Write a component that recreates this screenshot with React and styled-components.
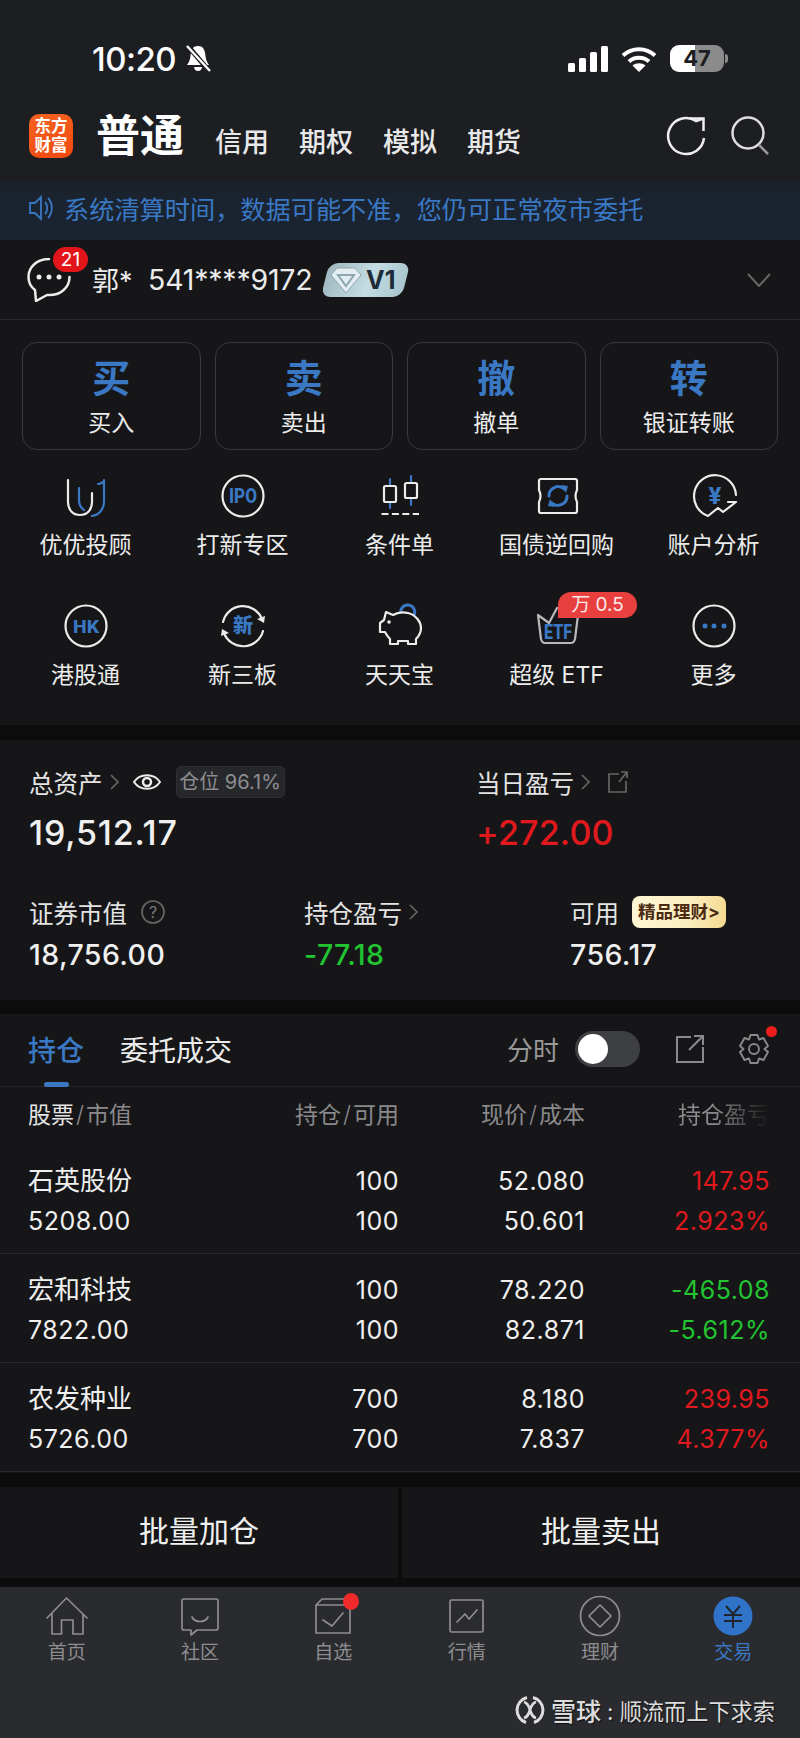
import React from 'react';
import styled, { createGlobalStyle } from 'styled-components';

const GlobalStyle = createGlobalStyle`
  html, body { margin: 0; padding: 0; background: #0c0c0d; }
  body { font-family: Inter, "Noto Sans CJK SC", sans-serif; }
  * { box-sizing: border-box; }
`;

const BLUE = '#3a78c4';
const RED = '#e0191e';
const GREEN = '#22c431';

const Page = styled.div`
  width: 800px;
  height: 1738px;
  overflow: hidden;
  display: flex;
  flex-direction: column;
  background: #0c0c0d;
  color: #ececec;
`;
const Top = styled.div`
  height: 180px;
  background: #1c1e22;
`;
const StatusBar = styled.div`
  height: 114px;
  padding: 45px 76px 0 92px;
  display: flex;
  align-items: flex-start;
  justify-content: space-between;
`;
const StatusTime = styled.div`
  display: flex;
  align-items: center;
  gap: 8px;
  height: 27px;
  font-size: 33px;
  font-weight: 500;
  letter-spacing: -0.5px;
  color: #fff;
`;
const StatusIcons = styled.div`
  display: flex;
  align-items: center;
  gap: 13px;
  height: 27px;
`;
const Battery = styled.div`
  position: relative;
  width: 54px;
  height: 27px;
  border-radius: 9px;
  background: linear-gradient(90deg, #fff 47%, #8b8b8b 47%);
  color: #1c1e22;
  font-size: 22px;
  font-weight: 700;
  line-height: 27px;
  text-align: center;
  &::after {
    content: '';
    position: absolute;
    right: -4px;
    top: 9px;
    width: 3px;
    height: 9px;
    border-radius: 0 3px 3px 0;
    background: #8b8b8b;
  }
`;
const Header = styled.div`
  display: flex;
  align-items: center;
  height: 44px;
  padding: 0 30px 0 29px;
`;
const Logo = styled.div`
  width: 44px;
  height: 44px;
  border-radius: 10px;
  background: linear-gradient(160deg, #f5631f, #f0480f);
  color: #fff;
  font-size: 16.5px;
  font-weight: 700;
  line-height: 19px;
  text-align: center;
  padding-top: 3px;
`;
const Title = styled.div`
  margin-left: 23px;
  font-size: 44px;
  font-weight: 700;
  line-height: 44px;
  color: #fff;
`;
const Modes = styled.div`
  display: flex;
  gap: 30px;
  margin-left: 31px;
  padding-top: 14px;
  font-size: 27px;
  font-weight: 500;
  line-height: 30px;
  color: #e8e8e8;
`;
const HeaderIcons = styled.div`
  margin-left: auto;
  display: flex;
  gap: 24px;
`;
const Notice = styled.div`
  height: 60px;
  display: flex;
  align-items: center;
  gap: 10px;
  padding: 0 0 5px 28px;
  background: linear-gradient(180deg, #1b2028, #1a2431 40%);
  color: ${BLUE};
  font-size: 25.2px;
  white-space: nowrap;
`;
const Panel = styled.div`
  background: #161618;
`;
const Account = styled.div`
  height: 80px;
  display: flex;
  align-items: center;
  padding: 0 29px 0 27px;
  border-bottom: 1px solid #2a2a2c;
  background: #161618;
`;
const ChatWrap = styled.div`
  position: relative;
  width: 44px;
  height: 44px;
  margin-right: 21px;
`;
const ChatBadge = styled.div`
  position: absolute;
  left: 26px;
  top: -11px;
  width: 35px;
  height: 25px;
  border-radius: 13px;
  background: #e3151b;
  color: #fff;
  font-size: 19px;
  line-height: 25px;
  text-align: center;
`;
const AccountName = styled.div`
  font-size: 27px;
  width: 56px;
  color: #ececec;
`;
const AccountNo = styled.div`
  font-size: 28.5px;
  width: 177px;
  letter-spacing: -0.2px;
  color: #ececec;
`;
const LevelTag = styled.div`
  position: relative;
  display: flex;
  align-items: center;
  gap: 4px;
  width: 81px;
  height: 34px;
  padding-left: 5px;
  color: #1d2c38;
  font-size: 25px;
  font-weight: 700;
  &::before {
    content: '';
    position: absolute;
    inset: 0;
    z-index: 0;
    background: linear-gradient(100deg, #9fb8c0, #c4dde3 55%, #a6c4cc);
    border-radius: 9px;
    transform: skewX(-14deg);
  }
  & > * { position: relative; z-index: 1; }
`;
const Chevron = styled.div`
  margin-left: auto;
  display: flex;
`;
const ActionRow = styled.div`
  display: grid;
  grid-template-columns: repeat(4, 178.5px);
  gap: 14px;
  padding: 22px 22px 0 22px;
`;
const ActionCard = styled.div`
  height: 108px;
  border: 1px solid #3a3a3c;
  border-radius: 15px;
  display: flex;
  flex-direction: column;
  align-items: center;
  padding-top: 10px;
`;
const ActionGlyph = styled.div`
  font-size: 38px;
  font-weight: 700;
  line-height: 50px;
  color: ${BLUE};
`;
const ActionLabel = styled.div`
  font-size: 23px;
  line-height: 32px;
  margin-top: 4px;
  color: #ececec;
`;
const Shortcuts = styled.div`
  display: grid;
  grid-template-columns: repeat(5, 157px);
  row-gap: 41px;
  padding: 22px 8px 34px 7px;
`;
const Shortcut = styled.div`
  position: relative;
  display: flex;
  flex-direction: column;
  align-items: center;
  gap: 9px;
  font-size: 23px;
  line-height: 32px;
  color: #ececec;
`;
const DealBadge = styled.div`
  position: absolute;
  left: 80px;
  top: -10px;
  width: 79px;
  height: 26px;
  border-radius: 13px 13px 13px 0;
  background: #e8403f;
  color: #fbeaea;
  font-size: 19px;
  line-height: 26px;
  text-align: center;
  white-space: nowrap;
`;
const Gap = styled.div`
  height: ${(p) => p.$h}px;
`;
const Assets = styled(Panel)`
  height: 260px;
  padding: 26px 0 0 29px;
`;
const AssetRow = styled.div`
  display: grid;
  grid-template-columns: ${(p) => p.$cols};
  margin-top: ${(p) => p.$top || 0}px;
`;
const AssetLabel = styled.div`
  display: flex;
  align-items: center;
  height: 32px;
  font-size: 24.5px;
  color: #e4e4e4;
`;
const ArrowBox = styled.span`
  display: flex;
  margin-left: 3px;
`;
const AssetValue = styled.div`
  font-size: ${(p) => p.$size}px;
  font-weight: 500;
  line-height: ${(p) => p.$line}px;
  margin-top: ${(p) => p.$top}px;
  letter-spacing: ${(p) => p.$track || 0}px;
  color: ${(p) => p.$color || '#f0f0f0'};
`;
const Eye = styled.span`
  display: flex;
  margin-left: 11px;
`;
const ExternalBox = styled.span`
  display: flex;
  margin-left: 14px;
`;
const PositionPill = styled.div`
  margin-left: 15px;
  width: 109px;
  height: 32px;
  border: 1px solid #303033;
  border-radius: 5px;
  background: #26272b;
  color: #8d8d90;
  font-size: 20px;
  line-height: 30px;
  text-align: center;
  white-space: nowrap;
`;
const GoldTag = styled.div`
  margin-left: 13px;
  width: 94px;
  height: 32px;
  border-radius: 8px;
  background: linear-gradient(100deg, #fff6d6, #fbeec0 60%, #f5d98e);
  color: #4a2a10;
  font-size: 17.5px;
  font-weight: 700;
  line-height: 32px;
  text-align: center;
  white-space: nowrap;
`;
const Holdings = styled(Panel)`
  height: 459px;
`;
const TabBar = styled.div`
  position: relative;
  height: 73px;
  display: flex;
  align-items: center;
  gap: 36px;
  padding: 0 30px 3px 28px;
  border-bottom: 1px solid #252527;
`;
const TabItem = styled.div`
  font-size: 28px;
  color: ${(p) => (p.$active ? BLUE : '#ececec')};
  font-weight: ${(p) => (p.$active ? 500 : 400)};
`;
const TabMarker = styled.div`
  position: absolute;
  left: 44px;
  bottom: -1px;
  width: 25px;
  height: 5px;
  border-radius: 3px;
  background: ${BLUE};
`;
const TabTools = styled.div`
  margin-left: auto;
  display: flex;
  align-items: center;
`;
const ToolLabel = styled.div`
  font-size: 26px;
  color: #999;
  margin-right: 16px;
`;
const Toggle = styled.div`
  width: 65px;
  height: 36px;
  border-radius: 18px;
  background: #3e3f42;
  padding: 3px;
  margin-right: 36px;
  &::before {
    content: '';
    display: block;
    width: 30px;
    height: 30px;
    border-radius: 50%;
    background: #fff;
  }
`;
const GearWrap = styled.div`
  position: relative;
  display: flex;
  margin-left: 34px;
`;
const GearDot = styled.div`
  position: absolute;
  right: -7px;
  top: -7px;
  width: 11px;
  height: 11px;
  border-radius: 50%;
  background: #ef1c1c;
`;
const TableGrid = styled.div`
  display: grid;
  grid-template-columns: 210px 161px 186px 185px;
  padding: 0 30px 0 28px;
`;
const TableHead = styled(TableGrid)`
  height: 58px;
  padding-bottom: 6px;
  align-items: center;
  font-size: 23px;
  color: #8a8a8c;
`;
const HeadCell = styled.div`
  text-align: ${(p) => (p.$left ? 'left' : 'right')};
  white-space: nowrap;
  ${(p) => p.$fade && `
    -webkit-mask-image: linear-gradient(90deg, #000 70%, transparent 100%);
    mask-image: linear-gradient(90deg, #000 70%, transparent 100%);
  `}
`;
const HeadStrong = styled.span`
  color: #e4e4e4;
`;
const HeadSlash = styled.span`
  margin: 0 2px;
  font-weight: 300;
`;
const Row = styled(TableGrid)`
  height: 109px;
  padding-top: 16px;
  border-bottom: 1px solid #28282a;
`;
const Cell = styled.div`
  text-align: ${(p) => (p.$left ? 'left' : 'right')};
  color: ${(p) => p.$color || '#f0f0f0'};
`;
const CellLine = styled.div`
  height: 40px;
  line-height: 40px;
  font-size: ${(p) => (p.$name ? 26 : 25)}px;
  letter-spacing: ${(p) => (p.$name ? 0 : 0.5)}px;
  white-space: nowrap;
`;
const BulkBar = styled.div`
  display: grid;
  grid-template-columns: 398px 398px;
  gap: 4px;
  margin-top: 14px;
  height: 91px;
`;
const BulkButton = styled(Panel)`
  display: flex;
  align-items: center;
  justify-content: center;
  padding-bottom: 7px;
  font-size: 30px;
  color: #f0f0f0;
`;
const Footer = styled.div`
  flex: 1;
  margin-top: 9px;
  background: #2a2b2f;
  padding-top: 8px;
`;
const FooterTabs = styled.div`
  display: grid;
  grid-template-columns: repeat(6, 1fr);
`;
const FooterTab = styled.div`
  position: relative;
  display: flex;
  flex-direction: column;
  align-items: center;
  gap: 1px;
  font-size: 19px;
  line-height: 26px;
  color: ${(p) => (p.$active ? BLUE : '#8e8e90')};
`;
const FooterDot = styled.div`
  position: absolute;
  left: 76px;
  top: -2px;
  width: 16px;
  height: 17px;
  border-radius: 50%;
  background: #f02a2a;
`;
const Watermark = styled.div`
  display: flex;
  align-items: center;
  justify-content: flex-end;
  gap: 6px;
  margin-top: 29px;
  padding-right: 25px;
  height: 30px;
  color: #dcdcdc;
  text-shadow: 1px 1px 1px rgba(0, 0, 0, 0.6);
  white-space: nowrap;
`;
const WatermarkName = styled.span`
  font-size: 25px;
  font-weight: 500;
`;
const WatermarkUser = styled.span`
  font-size: 22.2px;
`;

const line = { fill: 'none', stroke: '#ececec', strokeWidth: 2.2, strokeLinecap: 'round', strokeLinejoin: 'round' };
const blueLine = { ...line, stroke: BLUE };
const tabLine = { fill: 'none', stroke: '#8e8e90', strokeWidth: 1.7, strokeLinecap: 'round', strokeLinejoin: 'round' };
const iconText = { fill: BLUE, fontWeight: 800, textAnchor: 'middle', lengthAdjust: 'spacingAndGlyphs' };

const Ic = ({ size = 48, children }) => (
  <svg width={size} height={size} viewBox={`0 0 ${size} ${size}`}>{children}</svg>
);

const shortcuts = [
  { label: '优优投顾', icon: (
    <Ic>
      <path {...line} d="M6 8V30C6 38 11 43 18 43C25 43 30 38 30 30V21" />
      <path {...blueLine} d="M17 16V28C17 33 19 36 22 38" />
      <path {...blueLine} d="M36 12C39 12 42 10 42 8V30C42 37 37 43 30 44" />
    </Ic>
  ) },
  { label: '打新专区', icon: (
    <Ic>
      <circle {...line} cx="24" cy="24" r="20.5" />
      <text {...iconText} x="24" y="31" fontSize="20" textLength="28" fontFamily="Roboto, sans-serif">IPO</text>
    </Ic>
  ) },
  { label: '条件单', icon: (
    <Ic>
      <path {...blueLine} d="M14 7V14M14 30V36M35 4V11M35 26V33" />
      <rect {...line} x="8" y="14" width="12" height="16" rx="1.5" />
      <rect {...line} x="29" y="11" width="12" height="15" rx="1.5" />
      <path {...line} strokeLinecap="butt" strokeDasharray="7 3.4" d="M5.5 42H43" />
    </Ic>
  ) },
  { label: '国债逆回购', icon: (
    <Ic>
      <path {...line} d="M8 7H42A2 2 0 0 1 44 9V18Q41 24 44 30V39A2 2 0 0 1 42 41H8A2 2 0 0 1 6 39V30Q9 24 6 18V9A2 2 0 0 1 8 7Z" />
      <path {...blueLine} strokeWidth="3" d="M16 24A9 9 0 0 1 31 17M34 24A9 9 0 0 1 19 31" />
      <path fill={BLUE} d="M28 13L35 14L33 21ZM22 35L15 34L17 27Z" />
    </Ic>
  ) },
  { label: '账户分析', icon: (
    <Ic>
      <path {...line} d="M46 23A21 21 0 1 0 18 44L28 36L33 40L46 30H38" />
      <text {...iconText} x="25" y="32" fontSize="24" fontFamily="Roboto, sans-serif">¥</text>
    </Ic>
  ) },
  { label: '港股通', icon: (
    <Ic>
      <circle {...line} cx="24" cy="24" r="20.5" />
      <text {...iconText} x="24" y="30.5" fontSize="18" textLength="26" fontFamily="Roboto, sans-serif">HK</text>
    </Ic>
  ) },
  { label: '新三板', icon: (
    <Ic>
      <path {...line} d="M4 20A20.5 20.5 0 0 1 43 17M44 29A20.5 20.5 0 0 1 5 31" />
      <path fill="#ececec" d="M38 17L46 14L45 21ZM10 31L2 34L3 27Z" />
      <text {...iconText} x="24" y="31" fontSize="20" fontFamily='"Noto Sans CJK SC", sans-serif'>新</text>
    </Ic>
  ) },
  { label: '天天宝', icon: (
    <Ic>
      <path {...blueLine} strokeWidth="3" d="M25 12A7 7 0 1 1 38 13" />
      <path fill="#161618" stroke="#ececec" strokeWidth="2.2" strokeLinejoin="round" d="M10 10L17 13C22 10 28 10 32 11C40 13 45 20 45 26C45 32 42 35 40 37V42H32V39H22V42H14V37C12 35 10 32 9 30H4V21L8 18Z" />
      <circle cx="13" cy="20" r="1.8" fill="#ececec" />
    </Ic>
  ) },
  { label: '超级 ETF', badge: '万 0.5', icon: (
    <Ic>
      <path {...line} stroke="#b9b9bb" d="M5 13L8 37Q9 41 12 41H38Q41 41 42 37L45 13M5 13L16 21L24 6" />
      <text {...iconText} x="25" y="37" fontSize="19.5" textLength="28" fontFamily="Roboto, sans-serif">ETF</text>
    </Ic>
  ) },
  { label: '更多', icon: (
    <Ic>
      <circle {...line} cx="24" cy="24" r="20.5" />
      <circle cx="15" cy="24" r="2.5" fill={BLUE} />
      <circle cx="24" cy="24" r="2.5" fill={BLUE} />
      <circle cx="34" cy="24" r="2.5" fill={BLUE} />
    </Ic>
  ) },
];

const footerTabs = [
  { label: '首页', icon: <path {...tabLine} d="M2 23L21.5 3L42 23M7 19V39H16.5V25H28V39H38V19" /> },
  { label: '社区', icon: (
    <>
      <path {...tabLine} d="M6 4H38A2 2 0 0 1 40 6V33A2 2 0 0 1 38 35H19L13 40V35H6A2 2 0 0 1 4 33V6A2 2 0 0 1 6 4Z" />
      <path {...tabLine} d="M14 22C17 28 27 28 30 22" />
    </>
  ) },
  { label: '自选', dot: true, icon: (
    <>
      <path {...tabLine} d="M5 10H39V38H5ZM5 10L11 4H34" />
      <path {...tabLine} d="M12 25L21 31L32 18" />
    </>
  ) },
  { label: '行情', icon: (
    <>
      <rect {...tabLine} x="5" y="5" width="33" height="32" rx="1.5" />
      <path {...tabLine} d="M12 27L20 19L24 24L32 15" />
    </>
  ) },
  { label: '理财', icon: (
    <>
      <circle {...tabLine} cx="22" cy="21" r="19.5" />
      <path {...tabLine} d="M22 10L33 21L22 32L11 21Z" />
    </>
  ) },
  { label: '交易', active: true, icon: (
    <>
      <circle cx="22" cy="21" r="19.5" fill="#2f74c8" />
      <path fill="none" stroke="#20242c" strokeWidth="2" d="M15 11L22 19L29 11M13 20H31M13 26H31M22 19V33" />
    </>
  ) },
];

const rows = [
  { name: '石英股份', value: '5208.00', qty: '100', free: '100', price: '52.080', cost: '50.601', pnl: '147.95', pct: '2.923%', color: RED },
  { name: '宏和科技', value: '7822.00', qty: '100', free: '100', price: '78.220', cost: '82.871', pnl: '-465.08', pct: '-5.612%', color: GREEN },
  { name: '农发种业', value: '5726.00', qty: '700', free: '700', price: '8.180', cost: '7.837', pnl: '239.95', pct: '4.377%', color: RED },
];

const Arrow = () => (
  <ArrowBox>
    <svg width="16" height="22" viewBox="0 0 16 22">
      <path d="M5 4L12 11L5 18" fill="none" stroke="#666" strokeWidth="1.7" />
    </svg>
  </ArrowBox>
);

function App() {
  return (
    <Page>
      <GlobalStyle />
      <Top>
        <StatusBar>
          <StatusTime>
            10:20
            <svg width="28" height="27" viewBox="0 0 28 27">
              <path fill="#fff" d="M14 1C8 1 7 6 6.5 11C6 15 5 17 3 20H25C23 17 22 15 21.5 11C21 6 20 1 14 1ZM10 22C10.5 25 12 26 14 26C16 26 17.5 25 18 22Z" />
              <path stroke="#1c1e22" strokeWidth="5" d="M3 0L26 27" />
              <path stroke="#fff" strokeWidth="2.4" d="M3 1L26 26" />
            </svg>
          </StatusTime>
          <StatusIcons>
            <svg width="40" height="26" viewBox="0 0 40 26">
              <rect x="0" y="17" width="7" height="9" rx="1.5" fill="#fff" />
              <rect x="11" y="12" width="7" height="14" rx="1.5" fill="#fff" />
              <rect x="22" y="6" width="7" height="20" rx="1.5" fill="#fff" />
              <rect x="33" y="0" width="7" height="26" rx="1.5" fill="#fff" />
            </svg>
            <svg width="36" height="26" viewBox="0 0 36 26">
              <path fill="none" stroke="#fff" strokeWidth="4" d="M2 9.5C11 1 25 1 34 9.5M8 15.5C13.5 10.5 22.5 10.5 28 15.5" />
              <path fill="#fff" d="M18 26L11.5 19.5C15 16.5 21 16.5 24.5 19.5Z" />
            </svg>
            <Battery>47</Battery>
          </StatusIcons>
        </StatusBar>
        <Header>
          <Logo>东方<br />财富</Logo>
          <Title>普通</Title>
          <Modes>
            <span>信用</span>
            <span>期权</span>
            <span>模拟</span>
            <span>期货</span>
          </Modes>
          <HeaderIcons>
            <svg width="40" height="40" viewBox="0 0 40 40">
              <path fill="none" stroke="#eee" strokeWidth="2.5" d="M38 22A18 18 0 1 1 30 5L36 3" />
              <path fill="none" stroke="#eee" strokeWidth="2.5" d="M24 2.5H37.5V15" />
            </svg>
            <svg width="40" height="40" viewBox="0 0 40 40">
              <circle cx="18" cy="17" r="15.5" fill="none" stroke="#ddd" strokeWidth="2.5" />
              <path stroke="#999" strokeWidth="2.5" d="M29 29L38 38" />
            </svg>
          </HeaderIcons>
        </Header>
      </Top>
      <Notice>
        <svg width="26" height="26" viewBox="0 0 26 26">
          <path fill="none" stroke={BLUE} strokeWidth="1.8" d="M2 8H7L13 2V24L7 18H2ZM17 7C20 10 20 16 17 19M20 3C25 8 25 18 20 23" />
        </svg>
        系统清算时间，数据可能不准，您仍可正常夜市委托
      </Notice>
      <Account>
        <ChatWrap>
          <svg width="44" height="44" viewBox="0 0 44 44">
            <path {...line} strokeWidth="2.5" d="M22 1C10 1 1.5 9 1.5 19C1.5 25 4 29 8 32L9 43L20 37C33 38 42.5 30 42.5 19" />
            <circle cx="12" cy="19" r="2.5" fill="#ececec" />
            <circle cx="22" cy="19" r="2.5" fill="#ececec" />
            <circle cx="32" cy="19" r="2.5" fill="#ececec" />
          </svg>
          <ChatBadge>21</ChatBadge>
        </ChatWrap>
        <AccountName>郭*</AccountName>
        <AccountNo>541****9172</AccountNo>
        <LevelTag>
          <svg width="32" height="28" viewBox="0 0 32 28">
            <path fill="#e2eef1" stroke="#8ea7ae" d="M7 2H25L31 9L16 27L1 9Z" />
            <path fill="none" stroke="#8ea7ae" strokeWidth="2" d="M8 9H24L16 20Z" />
          </svg>
          <span>V1</span>
        </LevelTag>
        <Chevron>
          <svg width="24" height="14" viewBox="0 0 24 14">
            <path d="M1 1L12 13L23 1" fill="none" stroke="#666" strokeWidth="2" />
          </svg>
        </Chevron>
      </Account>
      <Panel>
        <ActionRow>
          <ActionCard><ActionGlyph>买</ActionGlyph><ActionLabel>买入</ActionLabel></ActionCard>
          <ActionCard><ActionGlyph>卖</ActionGlyph><ActionLabel>卖出</ActionLabel></ActionCard>
          <ActionCard><ActionGlyph>撤</ActionGlyph><ActionLabel>撤单</ActionLabel></ActionCard>
          <ActionCard><ActionGlyph>转</ActionGlyph><ActionLabel>银证转账</ActionLabel></ActionCard>
        </ActionRow>
        <Shortcuts>
          {shortcuts.map((s) => (
            <Shortcut key={s.label}>
              {s.icon}
              {s.badge && <DealBadge>{s.badge}</DealBadge>}
              <span>{s.label}</span>
            </Shortcut>
          ))}
        </Shortcuts>
      </Panel>
      <Gap $h={15} />
      <Assets>
        <AssetRow $cols="447px 1fr">
          <div>
            <AssetLabel>
              总资产<Arrow />
              <Eye>
                <svg width="28" height="20" viewBox="0 0 28 20">
                  <path fill="none" stroke="#ececec" strokeWidth="2" d="M1 10C7 1 21 1 27 10C21 19 7 19 1 10Z" />
                  <circle cx="14" cy="10" r="4" fill="none" stroke="#ececec" strokeWidth="2.5" />
                </svg>
              </Eye>
              <PositionPill>仓位 96.1%</PositionPill>
            </AssetLabel>
            <AssetValue $size={34} $line={44} $top={13} $track={0.8}>19,512.17</AssetValue>
          </div>
          <div>
            <AssetLabel>
              当日盈亏<Arrow />
              <ExternalBox>
                <svg width="22" height="24" viewBox="0 0 22 24">
                  <path fill="none" stroke="#666" strokeWidth="1.7" d="M12 4H2V22H19V11M12 12L20 2M14 2H20V8" />
                </svg>
              </ExternalBox>
            </AssetLabel>
            <AssetValue $size={34} $line={44} $top={13} $track={0.2} $color={RED}>+272.00</AssetValue>
          </div>
        </AssetRow>
        <AssetRow $cols="275px 266px 1fr" $top={41}>
          <div>
            <AssetLabel>
              证券市值
              <svg width="38" height="24" viewBox="0 0 38 24">
                <circle cx="26" cy="12" r="11" fill="none" stroke="#666" strokeWidth="1.7" />
                <text x="26" y="18" fontSize="16" fill="#777" textAnchor="middle">?</text>
              </svg>
            </AssetLabel>
            <AssetValue $size={28.5} $line={36} $top={9} $track={0.4}>18,756.00</AssetValue>
          </div>
          <div>
            <AssetLabel>持仓盈亏<Arrow /></AssetLabel>
            <AssetValue $size={28.5} $line={36} $top={9} $track={0.4} $color={GREEN}>-77.18</AssetValue>
          </div>
          <div>
            <AssetLabel>可用<GoldTag>精品理财&gt;</GoldTag></AssetLabel>
            <AssetValue $size={28.5} $line={36} $top={9} $track={0.4}>756.17</AssetValue>
          </div>
        </AssetRow>
      </Assets>
      <Gap $h={14} />
      <Holdings>
        <TabBar>
          <TabItem $active>持仓</TabItem>
          <TabItem>委托成交</TabItem>
          <TabMarker />
          <TabTools>
            <ToolLabel>分时</ToolLabel>
            <Toggle />
            <svg width="28" height="28" viewBox="0 0 28 28">
              <path fill="none" stroke="#8a8a8c" strokeWidth="2" d="M15 2H1V27H27V12M13 15L26 2M18 1H27V10" />
            </svg>
            <GearWrap>
              <svg width="32" height="32" viewBox="0 0 32 32">
                <path fill="none" stroke="#8a8a8c" strokeWidth="1.9" strokeLinejoin="round" d="M12.5 2L19.5 2L21 6.5L25.5 5L30 13L26.5 16L30 19L25.5 27L21 25.5L19.5 30H12.5L11 25.5L6.5 27L2 19L5.5 16L2 13L6.5 5L11 6.5Z" />
                <circle cx="16" cy="16" r="5" fill="none" stroke="#8a8a8c" strokeWidth="1.9" />
              </svg>
              <GearDot />
            </GearWrap>
          </TabTools>
        </TabBar>
        <TableHead>
          <HeadCell $left><HeadStrong>股票</HeadStrong><HeadSlash>/</HeadSlash>市值</HeadCell>
          <HeadCell>持仓<HeadSlash>/</HeadSlash>可用</HeadCell>
          <HeadCell>现价<HeadSlash>/</HeadSlash>成本</HeadCell>
          <HeadCell $fade>持仓盈亏</HeadCell>
        </TableHead>
        {rows.map((r) => (
          <Row key={r.name}>
            <Cell $left>
              <CellLine $name>{r.name}</CellLine>
              <CellLine>{r.value}</CellLine>
            </Cell>
            <Cell>
              <CellLine>{r.qty}</CellLine>
              <CellLine>{r.free}</CellLine>
            </Cell>
            <Cell>
              <CellLine>{r.price}</CellLine>
              <CellLine>{r.cost}</CellLine>
            </Cell>
            <Cell $color={r.color}>
              <CellLine>{r.pnl}</CellLine>
              <CellLine>{r.pct}</CellLine>
            </Cell>
          </Row>
        ))}
      </Holdings>
      <BulkBar>
        <BulkButton>批量加仓</BulkButton>
        <BulkButton>批量卖出</BulkButton>
      </BulkBar>
      <Footer>
        <FooterTabs>
          {footerTabs.map((t) => (
            <FooterTab key={t.label} $active={t.active}>
              <Ic size={44}>{t.icon}</Ic>
              {t.dot && <FooterDot />}
              <span>{t.label}</span>
            </FooterTab>
          ))}
        </FooterTabs>
        <Watermark>
          <svg width="30" height="30" viewBox="0 0 30 30">
            <path fill="none" stroke="#dcdcdc" strokeWidth="3" d="M12 2.5A13 13 0 0 0 11 27.5M18 2.5A13 13 0 0 1 19 27.5" />
            <path fill="none" stroke="#dcdcdc" strokeWidth="2.8" d="M9 7C17 9 13 21 21 23M21 7C13 9 17 21 9 23" />
          </svg>
          <WatermarkName>雪球</WatermarkName>
          <WatermarkUser>: 顺流而上下求索</WatermarkUser>
        </Watermark>
      </Footer>
    </Page>
  );
}

export default App;
